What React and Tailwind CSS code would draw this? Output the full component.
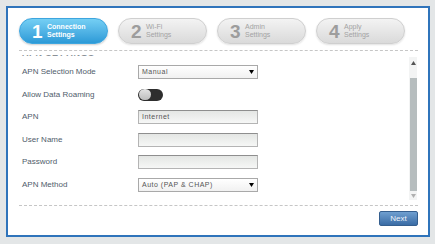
import React from 'react';

const steps = [
  { n: '1', top: 'Connection', bottom: 'Settings', active: true },
  { n: '2', top: 'Wi-Fi', bottom: 'Settings' },
  { n: '3', top: 'Admin', bottom: 'Settings' },
  { n: '4', top: 'Apply', bottom: 'Settings' },
];

const Arrow = ({ className = '' }) => (
  <svg width="5" height="4" viewBox="0 0 5 4" className={className}>
    <path d="M0 0 L5 0 L2.5 4 Z" fill="currentColor" />
  </svg>
);

const StepPill = ({ step }) => (
  <div
    className={
      step.active
        ? 'w-[89px] h-[26px] rounded-full flex items-center pl-[12px] border border-[#3da5de] bg-gradient-to-b from-[#74cff4] to-[#2b9ad7] shadow-[0_1px_2px_rgba(0,0,0,0.2)]'
        : 'w-[89px] h-[26px] rounded-full flex items-center pl-[12px] border border-[#cfcfcf] bg-gradient-to-b from-[#f3f3f3] to-[#dadada] shadow-[0_1px_2px_rgba(0,0,0,0.12)]'
    }
  >
    <span
      className={
        step.active
          ? 'w-[14px] text-[19px] leading-none font-bold text-white'
          : 'w-[14px] text-[19px] leading-none font-bold text-[#9d9d9d]'
      }
    >
      {step.n}
    </span>
    <div
      className={
        step.active
          ? 'ml-[1px] text-[7px] leading-[8px] font-bold text-white'
          : 'ml-[1px] text-[7px] leading-[8px] text-[#a3a3a3]'
      }
    >
      <div>{step.top}</div>
      <div>{step.bottom}</div>
    </div>
  </div>
);

const SelectBox = ({ value }) => (
  <div className="w-[120px] h-[14px] border border-[#a9a9a9] bg-gradient-to-b from-white to-[#f1f1f1] flex items-center justify-between pl-[3px] pr-[3px] text-[7px] tracking-[0.5px] text-[#555]">
    <span>{value}</span>
    <Arrow className="text-black" />
  </div>
);

const TextBox = ({ value = '' }) => (
  <div className="w-[120px] h-[14px] border border-[#b4b4b4] border-t-[#8e8e8e] bg-gradient-to-b from-[#e4e6e4] to-[#f6f7f6] flex items-center pl-[3px] text-[7px] tracking-[0.5px] text-[#555]">
    {value}
  </div>
);

const Toggle = () => (
  <div className="w-[25px] h-[12px] rounded-full bg-[#2e2e2e] flex items-center pl-[1px]">
    <div className="w-[12px] h-[11px] rounded-full bg-gradient-to-b from-[#e4e4e4] to-[#bdbdbd]" />
  </div>
);

const rows = [
  { label: 'APN Selection Mode', control: <SelectBox value="Manual" /> },
  { label: 'Allow Data Roaming', control: <Toggle /> },
  { label: 'APN', control: <TextBox value="Internet" /> },
  { label: 'User Name', control: <TextBox /> },
  { label: 'Password', control: <TextBox /> },
  { label: 'APN Method', control: <SelectBox value="Auto (PAP & CHAP)" /> },
];

export default function App() {
  return (
    <div className="w-[435px] h-[244px] bg-[#e3e6e7] pt-[6px] pl-[6px] font-['Liberation_Sans',Arial,sans-serif]">
      <div className="w-[424px] h-[231px] border-2 border-[#2f74bb] bg-white flex flex-col pl-[11px] pr-[10px] pt-[10px]">
        {/* steps */}
        <div className="flex gap-[10px]">
          {steps.map((s) => (
            <StepPill key={s.n} step={s} />
          ))}
        </div>

        <div className="mt-[6px] border-t border-dashed border-[#c6c6c6]" />

        {/* scroll area, scrolled a little so the heading is cut */}
        <div className="mt-[4px] h-[146px] flex overflow-hidden">
          <div className="flex-1 pl-[3px] -mt-[7px]">
            <div className="h-[10px] text-[9px] leading-[10px] font-bold text-[#8a9096] tracking-[0.5px]">
              APN SETTINGS
            </div>
            <div className="mt-[3px] flex flex-col">
              {rows.map((r) => (
                <div key={r.label} className="h-[22.5px] flex items-center">
                  <span className="w-[116px] text-[8px] text-[#4f5d6b]">{r.label}</span>
                  {r.control}
                </div>
              ))}
            </div>
          </div>

          {/* scrollbar */}
          <div className="w-[8px] mr-[1px] mt-[2px] h-[143px] bg-[#f3f4f4] flex flex-col items-center">
            <div className="h-[14px] pt-[4px] flex justify-center">
              <Arrow className="text-[#555] rotate-180" />
            </div>
            <div className="mt-[7px] w-[7px] h-[113px] bg-[#b6bdbe]" />
            <div className="flex-1 flex items-center justify-center">
              <Arrow className="text-[#b0b0b0]" />
            </div>
          </div>
        </div>

        <div className="mt-[4px] border-t border-dashed border-[#c6c6c6]" />

        <div className="mt-[5px] flex justify-end">
          <button className="w-[39px] h-[15px] rounded-[2px] border border-[#355f8f] bg-gradient-to-b from-[#6f9fd0] to-[#3a6ca5] text-[#eef4fb] text-[8px] leading-none">
            Next
          </button>
        </div>
      </div>
    </div>
  );
}
